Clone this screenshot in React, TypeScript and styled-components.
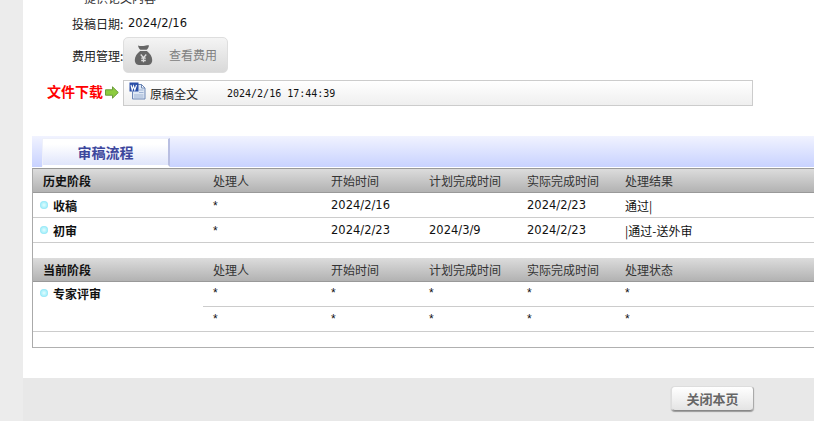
import React from "react";
import styled, { createGlobalStyle } from "styled-components";

const Global = createGlobalStyle`
  html, body { margin: 0; padding: 0; background: #ececec; }
  body { font-family: "Noto Sans CJK SC", "DejaVu Sans", sans-serif; font-size: 12px; color: #111; overflow: hidden; }
`;

const Page = styled.div`
  width: 814px;
  height: 421px;
  padding-left: 23px;
  box-sizing: border-box;
  overflow: hidden;
  display: flex;
  flex-direction: column;
`;

const Content = styled.main`
  height: 378px;
  background: #fff;
  overflow: hidden;
  display: flex;
  flex-direction: column;
  flex: none;
`;

const ClippedRow = styled.div`
  height: 14px;
  margin-top: -7px;
  padding-left: 61px;
  line-height: 9px;
  color: #333;
  flex: none;
`;

const InfoRow = styled.div`
  display: flex;
  align-items: center;
  height: 32px;
  padding-left: 49px;
  flex: none;
`;

const Label = styled.span`
  width: 51px;
  flex: none;
  white-space: nowrap;
  color: #222;
`;

const Value = styled.span`
  margin-left: 5px;
  font-family: "DejaVu Sans", sans-serif;
  font-size: 11.5px;
  color: #111;
`;

const FeeButton = styled.div`
  width: 105px;
  height: 36px;
  box-sizing: border-box;
  border: 1px solid #dedede;
  border-radius: 5px;
  background: linear-gradient(#f4f4f4, #d9d9d9);
  display: flex;
  align-items: center;
  padding: 0 0 2px 10px;
  color: #808080;
  gap: 16px;
`;

const BagIcon = styled.svg`
  width: 19px;
  height: 22px;
  flex: none;
  margin-top: 2px;
`;

const DownloadRow = styled.div`
  display: flex;
  align-items: center;
  height: 26px;
  margin-top: 9px;
  padding-left: 24px;
  flex: none;
`;

const DownloadLabel = styled.span`
  color: #f00;
  font-weight: 700;
  font-size: 14px;
  width: 56px;
  flex: none;
  white-space: nowrap;
  margin-top: -4px;
`;

const ArrowIcon = styled.svg`
  width: 14px;
  height: 13px;
  margin-left: 2px;
  margin-right: 4px;
  flex: none;
  margin-top: -2px;
`;

const FileBox = styled.div`
  width: 630px;
  height: 26px;
  box-sizing: border-box;
  border: 1px solid #ccc;
  background: linear-gradient(#fff, #efefef);
  display: flex;
  align-items: center;
  padding-left: 5px;
`;

const WordSvg = styled.svg`
  width: 17px;
  height: 18px;
  flex: none;
  margin-top: -4px;
`;

const FileName = styled.span`
  margin-left: 4px;
  width: 77px;
  flex: none;
  color: #222;
`;

const FileDate = styled.span`
  font-family: "DejaVu Sans Mono", monospace;
  font-size: 10px;
  color: #111;
`;

const Tabs = styled.div`
  margin: 30px 0 0 9px;
  height: 31px;
  background: linear-gradient(#f1f3ff, #c8d2ff);
  display: flex;
  align-items: flex-end;
  padding-left: 10px;
  flex: none;
`;

const Tab = styled.div`
  width: 128px;
  height: 29px;
  box-sizing: border-box;
  border: 1px solid #eef0fa;
  border-bottom: 2px solid #fff;
  border-right: 2px solid #b9bfe2;
  background: linear-gradient(#fff 20%, #e0e5fb);
  color: #3c469c;
  font-weight: 700;
  font-size: 14px;
  display: flex;
  align-items: center;
  justify-content: center;
  padding-bottom: 1px;
`;

const Flow = styled.section`
  margin: 1px 0 0 9px;
  height: 180px;
  box-sizing: border-box;
  border-left: 1px solid #aaa;
  border-top: 1px solid #999;
  border-bottom: 1px solid #b0b0b0;
  flex: none;
`;

const Columns = "180px 118px 98px 98px 98px 1fr";

const Head = styled.div`
  height: 24px;
  display: grid;
  grid-template-columns: ${Columns};
  align-items: center;
  background: linear-gradient(#dcdcdc, #b2b2b2);
  border-bottom: 1px solid #999;
  box-sizing: border-box;
  color: #333;
`;

const HeadFirst = styled.span`
  padding-left: 10px;
  font-weight: 700;
  color: #111;
`;

const Row = styled.div`
  height: 25px;
  box-sizing: border-box;
  display: grid;
  grid-template-columns: ${Columns};
  align-items: center;
  border-bottom: 1px solid #ccc;
`;

const Stage = styled.span`
  display: flex;
  align-items: center;
  gap: 5px;
  padding-left: 7px;
  font-weight: 700;
  color: #111;
`;

const Dot = styled.i`
  width: 8px;
  height: 8px;
  border-radius: 50%;
  background: radial-gradient(circle, #e4fdff 0%, #a6effa 55%, #62cfee 100%);
  flex: none;
`;

const Cell = styled.span`
  font-family: "DejaVu Sans", "Noto Sans CJK SC", sans-serif;
  font-size: 11.5px;
  color: #111;
  white-space: nowrap;
`;

const Star = styled.span`
  font-family: "Liberation Sans", sans-serif;
  font-size: 12px;
  line-height: 14px;
  padding-top: 1px;
  color: #111;
`;

const CnCell = styled.span`
  color: #111;
  white-space: nowrap;
`;

const Gap = styled.div`
  height: 15px;
`;

const Expert = styled.div`
  display: flex;
  border-bottom: 1px solid #ccc;
  height: 50px;
  box-sizing: border-box;
`;

const ExpertStage = styled(Stage)`
  width: 170px;
  height: 25px;
  box-sizing: border-box;
  flex: none;
  padding-bottom: 3px;
`;

const SubRows = styled.div`
  flex: 1;
`;

const SubRow = styled.div<{ $line?: boolean }>`
  height: 25px;
  box-sizing: border-box;
  display: grid;
  grid-template-columns: 118px 98px 98px 98px 1fr;
  align-items: center;
  padding: 0 0 3px 10px;
  border-bottom: ${(p) => (p.$line ? "1px solid #ccc" : "none")};
`;

const Footer = styled.footer`
  height: 43px;
  background: #e8e8e8;
  display: flex;
  align-items: flex-start;
  padding: 8px 0 0 648px;
  flex: none;
`;

const CloseButton = styled.button`
  width: 83px;
  height: 25px;
  border: 1px solid #ddd;
  border-bottom-color: #888;
  border-right-color: #aaa;
  border-radius: 4px;
  background: linear-gradient(#fff, #e4e4e4);
  box-shadow: 0 1px 1px #999;
  color: #666;
  font: 700 13px "Noto Sans CJK SC", sans-serif;
  padding: 0;
`;

const Bag = () => (
  <BagIcon viewBox="0 0 20 24">
    <path fill="#666" d="M4 1.500c2 .8 3 .8 6 .6 2.500-.2 4-.9 6-.6-.3 2-1.300 3.400-2.600 4.900H6.600C5.300 4.900 4.300 3.500 4 1.500z" />
    <path fill="#666" d="M6.300 7.500h7.400C17 10 19.500 13.500 19.500 17.500c0 4-2.500 5.500-5.500 5.500H6c-3 0-5.500-1.500-5.500-5.500 0-4 2.500-7.500 5.800-10z" />
    <path stroke="#ddd" strokeWidth="1.400" fill="none" d="M7 11.500l3 3.500 3-3.500M10 15v5M7.500 15.500h5M7.500 18h5" />
  </BagIcon>
);

const WordIcon = () => (
  <WordSvg viewBox="0 0 17 18">
    <path fill="#dfe8f5" stroke="#6d87b5" d="M3.500 2.500h9l3.500 3.500v11h-12.500z" />
    <path fill="#fff" stroke="#6d87b5" d="M12.500 2.500v3.500h3.500z" />
    <path stroke="#9db2d3" d="M10 8h4.500M10 10.500h4.500M5 13h9.500M5 15h9.500" />
    <rect x="0.500" y="0.500" width="9" height="9" fill="#2b4fa8" />
    <path stroke="#fff" strokeWidth="1.100" fill="none" d="M2 3l1.200 5 1.300-4 1.300 4L7.500 3" />
  </WordSvg>
);

const history = [
  ["收稿", "*", "2024/2/16", "", "2024/2/23", "通过|"],
  ["初审", "*", "2024/2/23", "2024/3/9", "2024/2/23", "|通过-送外审"],
];

const stars = ["a", "b", "c", "d", "e"];

const App = () => (
  <Page>
    <Global />
    <Content>
      <ClippedRow>提供论文内容</ClippedRow>
      <InfoRow>
        <Label>投稿日期:</Label>
        <Value>2024/2/16</Value>
      </InfoRow>
      <InfoRow>
        <Label>费用管理:</Label>
        <FeeButton>
          <Bag />
          查看费用
        </FeeButton>
      </InfoRow>
      <DownloadRow>
        <DownloadLabel>文件下载</DownloadLabel>
        <ArrowIcon viewBox="0 0 14 13">
          <path fill="#8ccb3f" stroke="#6a9c3a" d="M.5 3.800h7V.8l5.800 5.700-5.800 5.700V9.200h-7z" />
        </ArrowIcon>
        <FileBox>
          <WordIcon />
          <FileName>原稿全文</FileName>
          <FileDate>2024/2/16 17:44:39</FileDate>
        </FileBox>
      </DownloadRow>
      <Tabs>
        <Tab>审稿流程</Tab>
      </Tabs>
      <Flow>
        <Head>
          <HeadFirst>历史阶段</HeadFirst>
          <span>处理人</span>
          <span>开始时间</span>
          <span>计划完成时间</span>
          <span>实际完成时间</span>
          <span>处理结果</span>
        </Head>
        {history.map((r) => (
          <Row key={r[0]}>
            <Stage>
              <Dot />
              {r[0]}
            </Stage>
            <Star>{r[1]}</Star>
            <Cell>{r[2]}</Cell>
            <Cell>{r[3]}</Cell>
            <Cell>{r[4]}</Cell>
            <CnCell>{r[5]}</CnCell>
          </Row>
        ))}
        <Gap />
        <Head>
          <HeadFirst>当前阶段</HeadFirst>
          <span>处理人</span>
          <span>开始时间</span>
          <span>计划完成时间</span>
          <span>实际完成时间</span>
          <span>处理状态</span>
        </Head>
        <Expert>
          <ExpertStage>
            <Dot />
            专家评审
          </ExpertStage>
          <SubRows>
            <SubRow $line>
              {stars.map((s) => (
                <Star key={s}>*</Star>
              ))}
            </SubRow>
            <SubRow>
              {stars.map((s) => (
                <Star key={s}>*</Star>
              ))}
            </SubRow>
          </SubRows>
        </Expert>
      </Flow>
    </Content>
    <Footer>
      <CloseButton>关闭本页</CloseButton>
    </Footer>
  </Page>
);

export default App;
